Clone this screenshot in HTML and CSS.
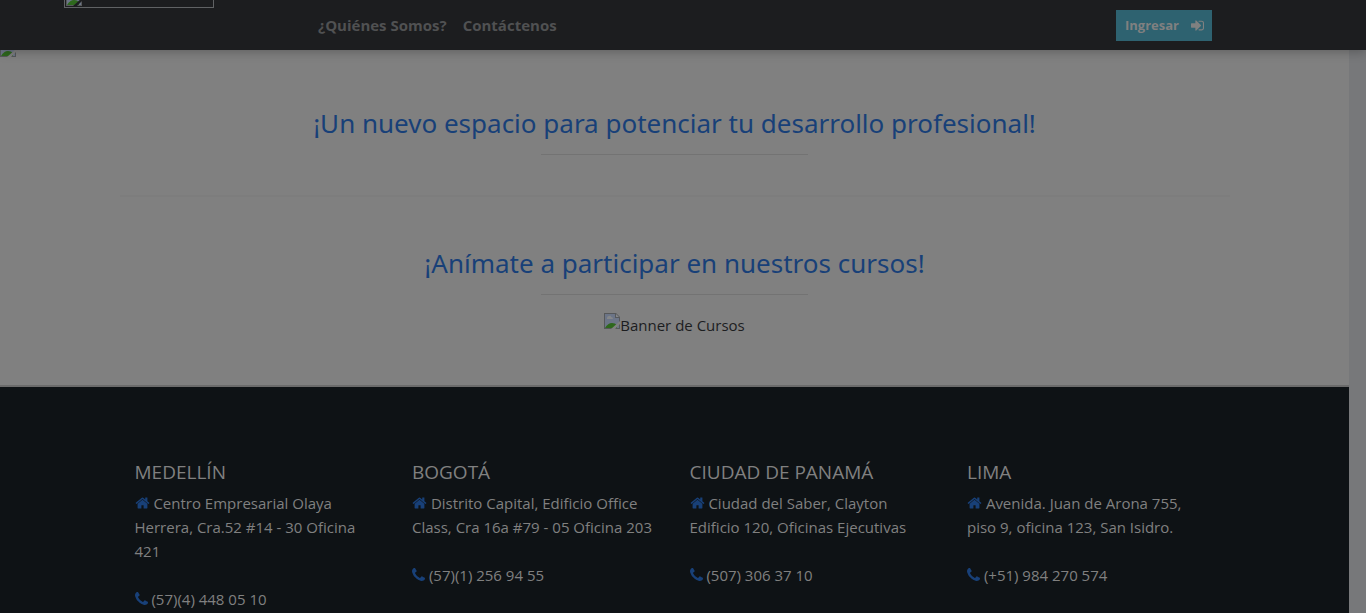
FILE: index.html
```html
<!DOCTYPE html>
<html lang="es">
<head>
<meta charset="utf-8">
<title>Cursos</title>
<meta name="viewport" content="width=device-width, initial-scale=1">
<link rel="stylesheet" href="styles.css">
</head>
<body>
<svg class="sprite" aria-hidden="true">
  <symbol id="home" viewBox="0 0 1664 1408"><path d="M1408 800v480q0 26-19 45t-45 19H960V960H704v384H320q-26 0-45-19t-19-45V800q0-1 .5-3t.5-3l575-474 575 474q1 2 1 6zm223-69l-62 74q-8 9-21 11h-3q-13 0-21-7L832 232 140 809q-12 8-24 7-13-2-21-11l-62-74q-8-10-7-23.500T37 686L756 87q32-26 76-26t76 26l244 204V96q0-14 9-23t23-9h192q14 0 23 9t9 23v408l219 182q10 8 11 21.500t-7 23.500z"/></symbol>
  <symbol id="phone" viewBox="0 0 1408 1408"><path d="M1408 1112q0 27-10 70.500t-21 68.500q-21 50-122 106-94 51-186 51-27 0-53-3.500t-57.500-12.500-47-14.500T856 1357.500t-49-18.500q-98-35-175-83-127-79-264-216T152 776q-48-77-83-175-3-9-18.500-49T30 496.500t-14.500-47T3.500 392 0 339q0-92 51-186Q107 52 157 31q25-11 68.500-21T296 0q14 0 21 3 18 6 53 76 11 19 30 54t35 63.500 31 53.500q3 4 17.500 25t21.500 35.500 7 28.500q0 20-28.500 50t-62 55-62 53-28.500 46q0 9 5 22.500t8.500 20.500 14 24 11.500 19q76 137 174 235t235 174q2 1 19 11.500t24 14 20.500 8.500 22.500 5q18 0 46-28.500t53-62 55-62 50-28.500q14 0 28.500 7t35.500 21.500 25 17.500q25 15 53.500 31t63.500 35 54 30q70 35 76 53 3 7 3 21z"/></symbol>
  <symbol id="broken" viewBox="0 0 16 16"><path fill="#56585a" d="M0 0h12l4 4v12H0z"/><path fill="#6c7587" d="M1 1h10v4h4v10H1z"/><path fill="#858789" d="M3 5q0-2 2-2 2-1 2 1 2 0 2 2H3zM12 1v3h3z"/><path fill="#2e681d" d="M1 15q3-5 7-5 3 0 5 2v3z"/><path fill="#808080" d="M7 16l9-8v3l-5 5z"/></symbol>
  <symbol id="broken-dark" viewBox="0 0 16 16"><path fill="#56585a" d="M0 0h12l4 4v12H0z"/><path fill="#6c7587" d="M1 1h10v4h4v10H1z"/><path fill="#2e681d" d="M1 15q3-5 7-5 3 0 5 2v3z"/><path fill="#1c1d1f" d="M7 16l9-8v3l-5 5z"/></symbol>
</svg>

<header class="topbar">
  <a class="brand" href="#" aria-label="Inicio"><svg class="broken"><use href="#broken-dark"/></svg></a>
  <nav class="links">
    <a href="#nosotros">¿Quiénes Somos?</a>
    <a href="#contacto">Contáctenos</a>
  </nav>
  <button class="login" type="button">Ingresar
    <svg class="login-icon" viewBox="0 0 1536 1280" aria-hidden="true"><path fill="currentColor" d="M1184 640q0 26-19 45l-544 544q-19 19-45 19t-45-19-19-45V896H64q-26 0-45-19T0 832V448q0-26 19-45t45-19h448V96q0-26 19-45t45-19 45 19l544 544q19 19 19 45zM1536 352v576q0 119-84.500 203.500T1248 1216H928q-32 0-32-32v-64q0-32 32-32h320q66 0 113-47t47-113V352q0-66-47-113t-113-47H928q-32 0-32-32V96q0-32 32-32h320q119 0 203.500 84.500T1536 352z"/></svg>
  </button>
</header>

<div class="page">
  <main>
    <div class="slide"><svg class="broken"><use href="#broken"/></svg></div>
    <div class="container">
      <section class="block" id="nosotros">
        <h2>¡Un nuevo espacio para potenciar tu desarrollo profesional!</h2>
        <hr class="short">
      </section>
      <hr class="divider">
      <section class="block">
        <h2>¡Anímate a participar en nuestros cursos!</h2>
        <hr class="short">
        <p class="banner"><svg class="broken"><use href="#broken"/></svg>Banner de Cursos</p>
      </section>
    </div>
  </main>

  <footer id="contacto">
    <div class="container offices">
      <section>
        <h3>MEDELLÍN</h3>
        <p><svg class="icon home"><use href="#home"/></svg> Centro Empresarial Olaya Herrera, Cra.52 #14 - 30 Oficina 421</p>
        <p><svg class="icon phone"><use href="#phone"/></svg> (57)(4) 448 05 10</p>
      </section>
      <section>
        <h3>BOGOTÁ</h3>
        <p><svg class="icon home"><use href="#home"/></svg> Distrito Capital, Edificio Office Class, Cra 16a #79 - 05 Oficina 203</p>
        <p><svg class="icon phone"><use href="#phone"/></svg> (57)(1) 256 94 55</p>
      </section>
      <section>
        <h3>CIUDAD DE PANAMÁ</h3>
        <p><svg class="icon home"><use href="#home"/></svg> Ciudad del Saber, Clayton Edificio 120, Oficinas Ejecutivas</p>
        <p><svg class="icon phone"><use href="#phone"/></svg> (507) 306 37 10</p>
      </section>
      <section>
        <h3>LIMA</h3>
        <p><svg class="icon home"><use href="#home"/></svg> Avenida. Juan de Arona 755,<br>piso 9, oficina 123, San Isidro.</p>
        <p><svg class="icon phone"><use href="#phone"/></svg> (+51) 984 270 574</p>
      </section>
    </div>
  </footer>
</div>
</body>
</html>
```
FILE: styles.css
```css
* { box-sizing: border-box; }

body {
  margin: 0;
  min-height: 100vh;
  display: flex;
  flex-direction: column;
  background: #77787a;
  color: #1c1d1f;
  font: 15px/24px "Open Sans", "Noto Sans", sans-serif;
}

h2, h3, p { margin: 0; }

.sprite { position: absolute; width: 0; height: 0; }

.topbar {
  position: sticky;
  top: 0;
  z-index: 1;
  display: flex;
  align-items: center;
  height: 50px;
  padding: 0 154px 0 64px;
  background: #1c1d1f;
  box-shadow: 0 2px 10px rgba(0, 0, 0, .25);
}

.brand {
  display: flex;
  align-items: flex-end;
  align-self: flex-start;
  width: 150px;
  height: 8px;
  padding: 0 1px 1px;
  overflow: hidden;
  border: 1px solid #606264;
  border-top: 0;
}

.broken { flex: none; width: 16px; height: 16px; }

.links {
  display: flex;
  gap: 16px;
  margin-left: 104px;
  font-weight: 700;
}

.links a { color: #505152; text-decoration: none; }

.login {
  display: flex;
  align-items: center;
  gap: 12px;
  margin-left: auto;
  padding: 4px 8px 4px 9px;
  border: 0;
  background: #2e6270;
  color: #808080;
  font: 700 13px/23px "Open Sans", "Noto Sans", sans-serif;
}

.login-icon { width: 13px; height: 11px; }

.page {
  flex: 1;
  display: flex;
  flex-direction: column;
  margin-right: 17px;
  background: #808080;
}

.slide {
  display: flex;
  align-items: flex-end;
  height: 7px;
}

.container {
  width: 100%;
  max-width: 1110px;
  margin: 0 auto;
}

.block { padding-top: 49px; text-align: center; }

h2 {
  color: #184078;
  font-family: "Noto Sans", "Open Sans", sans-serif;
  font-size: 26px;
  font-weight: 400;
  line-height: 34px;
}

hr { margin: 0; border: 0; }

.short {
  width: 24%;
  height: 1px;
  margin: 14px auto 0;
  background: #737373;
}

.divider {
  height: 2px;
  margin-top: 40px;
  background: #7d7d7d;
}

.banner {
  display: flex;
  justify-content: center;
  padding: 18px 0 48px;
}

footer {
  flex: 1;
  padding-top: 73px;
  border-top: 2px solid #6b6b6b;
  background: #0e1215;
  color: #808080;
}

.offices {
  display: grid;
  grid-template-columns: repeat(4, 1fr);
}

.offices section { padding: 0 15px; }

h3 {
  margin-bottom: 7px;
  font-size: 19px;
  font-weight: 400;
  line-height: 24px;
}

.offices p + p { margin-top: 24px; }

.icon { fill: #184078; }
.home { width: 15px; height: 12px; }
.phone { width: 13px; height: 13px; }
```
